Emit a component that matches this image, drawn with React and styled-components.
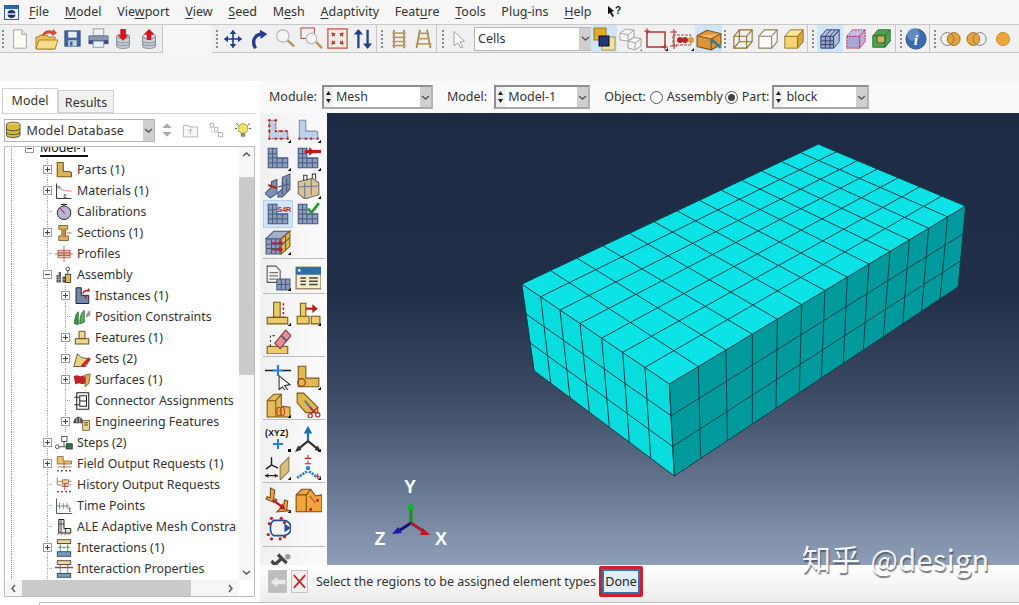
import React from 'react';
import styled, { createGlobalStyle } from 'styled-components';

const Global = createGlobalStyle`
  html, body { margin: 0; padding: 0; background: #fff; }
  * { box-sizing: border-box; }
`;
const FONT = `"Noto Sans", "Open Sans", Arial, sans-serif`;

const Page = styled.div`
  width: 1019px; height: 605px; overflow: hidden; position: relative;
  display: flex; flex-direction: column; background: #fff;
  font-family: ${FONT}; font-size: 12.5px; color: #333;
`;
const MenuBar = styled.div`
  height: 24px; display: flex; align-items: center; background: #f6f6f6; padding: 0 0 0 4px; flex: none;
`;
const MenuList = styled.div`display: flex; gap: 15.7px; margin-left: 10px; line-height: 24px; padding-bottom: 1px;`;
const MenuItem = styled.span`
  color: #333; white-space: nowrap;
  u { text-underline-offset: 2px; }
`;
const HelpCursor = styled.span`display: flex; margin-left: 16px;`;

const ToolRow = styled.div`
  height: 29px; flex: none; display: flex; background: #f6f6f6;
  border-top: 1px solid #c9c9c9;
`;
const ToolGroupA = styled.div`
  width: 163px; height: 28px; display: flex; align-items: center; background: #efefef;
  border-right: 1px solid #c4c4c4; border-bottom: 1px solid #c4c4c4;
`;
const ToolGap = styled.div`width: 49px; flex: none;`;
const ToolGroupB = styled.div`
  flex: 1; height: 28px; display: flex; align-items: center; background: #f0f0f0;
  border-bottom: 1px solid #c4c4c4; overflow: hidden;
`;
const Grip = styled.span`
  width: ${p => p.$w || 8}px; height: 18px; flex: none;
  background: repeating-linear-gradient(to bottom, #8a8a8a 0 2px, transparent 2px 4px) no-repeat ${p => p.$x || 3}px 0 / 2px 100%;
`;
const ToolBtn = styled.span`
  width: ${p => p.$w || 26}px; height: 27px; flex: none; display: flex; align-items: center; justify-content: center;
  background: ${p => (p.$on ? '#cfe5f8' : 'transparent')};
`;
const ToolSep = styled.span`width: 1px; height: 27px; flex: none; background: #c8c8c8;`;
const CellsCombo = styled.span`
  width: 117px; height: 24px; margin: 0 0 0 2px; flex: none; display: flex; align-items: stretch; background: #fff;
  border: 1px solid #b5b5b5; border-right: 0; line-height: 21px; padding-left: 3px; justify-content: space-between;
`;
const Spacer = styled.div`height: 28px; flex: none; background: #f5f5f5;`;

const Main = styled.div`flex: 1; min-height: 0; display: flex;`;
const Left = styled.div`width: 260px; flex: none; display: flex; flex-direction: column; background: #fff; padding: 7px 0 5px 4px;`;
const Tabs = styled.div`display: flex; height: 25px; flex: none; margin-left: -2px; align-items: flex-end;`;
const Tab = styled.div`
  width: ${p => p.$w}px; height: ${p => (p.$on ? 25 : 23)}px; text-align: center; line-height: 24px;
  background: ${p => (p.$on ? '#fff' : '#f1f1f1')}; border: 1px solid #d2d2d2; border-bottom: ${p => (p.$on ? '0' : '1px solid #d2d2d2')};
`;
const DbRow = styled.div`height: 33px; flex: none; display: flex; align-items: center; margin-right: 5px; border-top: 1px solid #d2d2d2; margin-left: -2px; padding-left: 2px;`;
const DbCombo = styled.div`
  width: 154px; height: 23px; display: flex; align-items: center; border: 1px solid #b5b5b5; background: #fff;
  line-height: 21px; letter-spacing: .15px;
`;
const DbIcons = styled.div`display: flex; align-items: center;`;
const DropBtn = styled.span`
  width: ${p => p.$w || 11}px; align-self: stretch; margin-left: auto; flex: none; background: #cfcfcf;
  display: flex; align-items: center; justify-content: center;
`;
const TreeBox = styled.div`
  flex: 1; min-height: 0; width: 251px; border: 1px solid #bdbdbd;
  display: grid; grid-template-columns: 1fr 15px; grid-template-rows: 1fr 16px;
`;
const TreeClip = styled.div`overflow: hidden; min-width: 0; min-height: 0; margin-right: 2px;`;
const TreeList = styled.div`margin-top: -9px;`;
const TreeRow = styled.div`
  height: 21px; display: flex; align-items: center; white-space: nowrap; overflow: hidden;
  padding-left: ${p => (p.$l === 0 ? 20 : p.$l === 1 ? 38 : 56)}px;
  background-repeat: no-repeat;
  background-image:
    repeating-linear-gradient(to bottom, #9a9a9a 0 1px, transparent 1px 2px),
    repeating-linear-gradient(to bottom, #a8a8a8 0 1px, transparent 1px 2px),
    repeating-linear-gradient(to bottom, #a8a8a8 ${p => (p.$l === 2 ? '0 1px' : '0 0')}, transparent ${p => (p.$l === 2 ? '1px 2px' : '0 2px')});
  background-size: 1px 100%, ${p => (p.$l === 0 ? '0' : '1px')} 100%, 1px 100%;
  background-position: 6px 0, 42px 0, 60px 0;
`;
const Expander = styled.span`
  width: 9px; height: 9px; flex: none; border: 1px solid #9c9c9c; background: #fff;
  display: flex; align-items: center; justify-content: center; margin-right: 3px; position: relative;
  &::before { content: ''; width: 5px; height: 1px; background: #444; position: absolute; }
  &::after { content: ''; width: 1px; height: 5px; background: #444; position: absolute; display: ${p => (p.$open ? 'none' : 'block')}; }
`;
const Stub = styled.span`
  height: 1px; flex: none; margin-left: 4px; width: 5px; margin-right: 3px; border-top: 1px dotted #aaa;
`;
const TreeIcon = styled.span`width: 18px; height: 18px; flex: none; margin-right: 4px; display: flex; align-items: center; justify-content: center;`;
const TreeText = styled.span`
  color: #333; font-size: 12.4px;
  ${p => p.$sel && `border-bottom: 2px solid #111; line-height: 15px; color: #111; margin-left: 3px;`}
`;
const VScroll = styled.div`background: #f6f6f6; display: flex; flex-direction: column; align-items: stretch; grid-column: 2; grid-row: 1;`;
const VArrow = styled.span`height: 15px; display: flex; align-items: center; justify-content: center; flex: none; margin-top: ${p => (p.$end ? 'auto' : '0')};`;
const VThumb = styled.div`height: 198px; margin-top: 15px; background: #cbcbcb; flex: none;`;
const HScroll = styled.div`background: #f6f6f6; display: flex; align-items: stretch;`;
const HArrow = styled.span`width: 17px; display: flex; align-items: center; justify-content: center; flex: none; margin-left: ${p => (p.$end ? 'auto' : '0')};`;
const HThumb = styled.div`width: 169px; background: #cbcbcb; flex: none;`;
const Corner = styled.div`background: #fff;`;

const Right = styled.div`flex: 1; min-width: 0; display: flex; flex-direction: column;`;
const ContextBar = styled.div`
  height: 32px; flex: none; display: flex; align-items: center; background: #fafafa; padding-left: 9px; line-height: 20px;
`;
const Label = styled.span`margin: ${p => p.$m || '0'}; white-space: nowrap;`;
const CtxCombo = styled.span`
  width: ${p => p.$w}px; height: 24px; flex: none; display: flex; align-items: center; background: #fff;
  border: 2px solid #a9a9a9; border-top-color: #8f8f8f; border-left-color: #8f8f8f; border-right-color: #b4b4b4; margin: ${p => p.$m || '0'};
`;
const Spin = styled.span`
  width: 9px; height: 100%; flex: none; background: #efefef; margin-right: 3px; display: flex; flex-direction: column; align-items: center; justify-content: center; gap: 2px;
`;
const Radio = styled.span`
  width: 13px; height: 13px; border-radius: 50%; border: 1px solid #555; flex: none; background: #fff; margin: 0 4px 0 ${p => (p.$on ? 2 : 4)}px;
  display: flex; align-items: center; justify-content: center;
  &::after { content: ''; width: 7px; height: 7px; border-radius: 50%; background: #444; display: ${p => (p.$on ? 'block' : 'none')}; }
`;

const Work = styled.div`height: 452px; flex: none; display: flex;`;
const Toolbox = styled.div`
  width: 67px; flex: none; overflow: hidden; background: linear-gradient(to right, #f0f0f0, #fbfbfb); padding-left: 3px;
`;
const BoxSection = styled.div`
  display: grid; grid-template-columns: 30px 30px; grid-auto-rows: 28px; width: 62px;
  padding: ${p => p.$p}; border-bottom: ${p => (p.$last ? '0' : '1px solid #bdbdbd')};
`;
const BoxBtn = styled.span`
  display: flex; align-items: center; justify-content: center; height: 28px;
  ${p => p.$on && `background: #cfe5f8; box-shadow: inset 0 0 0 1px #b4d2ec;`}
`;
const Viewport = styled.div`
  flex: 1; position: relative; overflow: hidden;
  background: linear-gradient(to bottom, #1c2a43 0%, #222f49 40%, #3b4963 62%, #66758f 82%, #8f9fb8 100%);
`;
const Scene = styled.svg`position: absolute; left: 0; top: 0; width: 692px; height: 452px;`;
const Prompt = styled.div`
  flex: 1; display: flex; align-items: center; padding: 0 0 4px 8px; background: linear-gradient(to bottom, #fff, #ececec);
`;
const PromptBtn = styled.span`
  width: ${p => p.$w}px; height: 23px; flex: none; display: flex; align-items: center; justify-content: center;
  background: ${p => p.$bg}; border: 1px solid #c4c4c4; margin-right: 4px;
`;
const PromptText = styled.span`margin-left: 4px; white-space: nowrap;`;
const DoneOutline = styled.span`
  width: 44px; height: 31px; margin-left: 3px; border: 3px solid #d0202a; border-radius: 2px; flex: none; display: flex;
`;
const DoneBtn = styled.span`
  flex: 1; border: 2px solid #2f74b5; background: #e3eef8; text-align: center; line-height: 21px; color: #222;
`;
const Footer = styled.div`height: 3px; flex: none; display: flex; background: #fff;`;
const FooterTab = styled.div`width: 40px; flex: none; border-right: 1px solid #c8c8c8;`;
const FooterLine = styled.div`flex: 1; border-top: 1px solid #bcbcbc;`;
const Watermark = styled.div`
  position: absolute; left: 802px; top: 536px; white-space: nowrap; color: rgba(255,255,255,.92);
  font-family: "Noto Sans CJK SC", "Noto Sans", sans-serif; font-size: 29px; line-height: 44px; letter-spacing: .3px; word-spacing: 3px;
  text-shadow: 1px 2px 1px rgba(70,75,85,.75);
`;
const SvgBase = styled.svg`display: block; flex: none; overflow: hidden;`;

const Ic = ({ s = 24, vb = '0 0 24 24', children }) => <SvgBase width={s} height={s} viewBox={vb}>{children}</SvgBase>;
const Tri = <path d="M24 21v3h-3z" fill="#111" />;
const Chev = ({ d }) => (
  <SvgBase width="9" height="9" viewBox="0 0 9 9"><path d={d === 'up' ? 'M1 6l3.5-3L8 6' : d === 'left' ? 'M6 1L3 4.5 6 8' : d === 'right' ? 'M3 1l3 3.5L3 8' : 'M1 3l3.5 3L8 3'} fill="none" stroke="#555" strokeWidth="1.4" /></SvgBase>
);
const Tan = '#d9b45a';
const Dots = ({ pts, r = 1.1 }) => <>{pts.map(([x, y], i) => <circle key={i} cx={x} cy={y} r={r} fill="#b8232b" />)}</>;
const MeshL = ({ x = 0, y = 0, k = 1 }) => (
  <g transform={`translate(${x} ${y}) scale(${k})`}>
    <path d="M3 3h8v9h10v9H3z" fill="#8b9cbc" stroke="#46587f" />
    <path d="M3 8h8M3 12h18M3 16.500h18M7 3v18M11 12v9M16 12v9" stroke="#46587f" fill="none" strokeWidth=".9" />
  </g>
);
const LShape = (p) => <path d="M4 3h6v10h9a2 2 0 0 1 2 2v5H4z" {...p} />;
const Cyl = ({ up }) => (
  <Ic s={22}>
    <path d="M4 9v11c0 3 14 3 14 0V9z" fill="#c8ced6" stroke="#7b8793" />
    <ellipse cx="11" cy="9" rx="7" ry="2.500" fill="#dfe3e8" stroke="#7b8793" />
    <path d="M4 14c0 3 14 3 14 0M4 17c0 3 14 3 14 0" fill="none" stroke="#7b8793" />
    <path d={up ? 'M11 1l6 6h-3.500v6h-5V7H5z' : 'M8 1h6v7h3l-6 6-6-6h3z'} fill="#d3141c" />
  </Ic>
);

const icons = {
  logo: <Ic s={15} vb="0 0 15 15"><rect x=".5" y=".5" width="14" height="14" fill="#f4f8fc" stroke="#2d5f9e" /><rect x="1" y="1" width="13" height="3" fill="#2d67ad" /><circle cx="7.500" cy="9" r="4" fill="#1c2f6b" /><path d="M3 9h9" stroke="#fff" strokeWidth="1.300" /></Ic>,
  help: <Ic s={15} vb="0 0 15 15"><path d="M1 1l6 5-2.500 1 2.500 4-1.500 1-2.400-4L1 9z" fill="#111" /><text x="8" y="9" fontSize="10" fontWeight="700" fontFamily="Liberation Sans" fill="#222">?</text></Ic>,
  newDoc: <Ic s={22}><path d="M5 2h9l5 5v15H5z" fill="#fbfaf2" stroke="#9ba3ad" /><path d="M14 2v5h5" fill="#e6e6e6" stroke="#9ba3ad" /></Ic>,
  open: <Ic s={24}><path d="M2 22l0-12h3l1-2h7l1 2h7v12z" fill="#e9c25a" stroke="#a98325" /><path d="M2 22l3-9h19l-3 9z" fill="#f6da85" stroke="#a98325" /><path d="M8 9c1-5 6-7 11-5l0-2 4 4-5 3 0-2c-3-1-7-1-8 2z" fill="#d9482a" /></Ic>,
  save: <Ic s={17} vb="0 0 20 20"><rect x="1" y="1" width="18" height="18" fill="#3e64a0" stroke="#2f4e80" /><rect x="5" y="2" width="10" height="7" fill="#e9edf4" /><rect x="5" y="12" width="10" height="7" fill="#c6cfde" /><rect x="7" y="13.500" width="3" height="5" fill="#3e64a0" /></Ic>,
  print: <Ic s={21}><rect x="6" y="1" width="12" height="8" fill="#eef0f4" stroke="#8b95a3" /><path d="M1 9h22v9H1z" fill="#8a97ad" stroke="#616e85" /><rect x="1" y="14" width="22" height="4" fill="#304e90" /><rect x="6" y="15" width="12" height="7" fill="#f0f1f3" stroke="#8b95a3" /></Ic>,
  dbDown: <Cyl />,
  dbUp: <Cyl up />,
  move: <Ic s={20}><path d="M12 2v20M2 12h20" stroke="#233e8e" strokeWidth="2" /><path d="M12 1l4 5H8zM12 23l4-5H8zM1 12l5-4v8zM23 12l-5-4v8z" fill="#233e8e" /></Ic>,
  rotate: <Ic s={20}><path d="M8 23C3 16 6 7 15 6" fill="none" stroke="#233e8e" strokeWidth="4" /><path d="M13 1l9 5-8 6z" fill="#233e8e" /></Ic>,
  zoom: <Ic s={21}><path d="M13 13l9 8" stroke="#b39a62" strokeWidth="3" /><circle cx="9" cy="9" r="7" fill="#f3f4f4" stroke="#bdbdbd" strokeWidth="1.500" /></Ic>,
  boxZoom: <Ic s={23}><rect x="1" y="1" width="14" height="11" fill="none" stroke="#a34a44" /><path d="M16 15l7 7" stroke="#b39a62" strokeWidth="2.500" /><circle cx="12" cy="12" r="5.500" fill="#f3f4f4" stroke="#bdbdbd" strokeWidth="1.300" /></Ic>,
  fit: <Ic s={21}><rect x="1" y="1" width="22" height="22" fill="#eeeae4" stroke="#c45a4c" strokeWidth="1.500" /><path d="M5 5l5 1-4 4zM19 5l-1 5-4-4zM5 19l1-5 4 4zM19 19l-5-1 4-4z" fill="#bf3b2c" /><path d="M6 6l3 3M18 6l-3 3M6 18l3-3M18 18l-3-3" stroke="#bf3b2c" strokeWidth="1.500" /></Ic>,
  flip: <Ic s={22}><path d="M7 22V4M17 2v18" stroke="#233e8e" strokeWidth="2.500" /><path d="M7 1l5 6H2zM17 23l5-6H12z" fill="#233e8e" /></Ic>,
  rails: <Ic s={20}><path d="M6 1v22M18 1v22" stroke="#a08a50" strokeWidth="2" /><path d="M4 5h16M4 10h16M4 15h16M4 20h16" stroke="#b59e63" strokeWidth="2" /></Ic>,
  rails2: <Ic s={21}><path d="M8 2L4 23M16 2l4 21" stroke="#a08a50" strokeWidth="2" /><path d="M6 6h12M5 12h14M3 18h18" stroke="#b59e63" strokeWidth="2" /></Ic>,
  cursor: <Ic s={18}><path d="M4 2l14 13-6 1 4 7-3 1-4-7-5 4z" fill="#fafafa" stroke="#a2a2a2" strokeWidth="1.300" /></Ic>,
  sel1: <Ic s={24}><rect x="2" y="1" width="12" height="12" fill="#e3a92d" stroke="#9c7618" /><rect x="10" y="10" width="13" height="13" fill="#f4e59c" stroke="#a78f3c" /><rect x="7" y="9" width="10" height="10" fill="#22357f" stroke="#111" /></Ic>,
  sel2: <Ic s={24}><path d="M2 6l6-4 8 1v7l-6 4-8-1z M10 14l6-4 7 2v7l-6 4-7-2z" fill="#f4f4f4" stroke="#a4a4a4" /><path d="M2 6l8 2v6M16 3l-6 5M10 14l7 2v7M23 12l-6 4" fill="none" stroke="#a4a4a4" /><path d="M24 22v2h-2z" fill="#666" /></Ic>,
  sel3: <Ic s={24}><rect x="3" y="5" width="18" height="15" fill="none" stroke="#a6473f" strokeWidth="1.600" /><path d="M3 1v6M0 4h6M21 17v6M18 20h6" stroke="#b8232b" />{Tri}</Ic>,
  sel4: <Ic s={24}><path d="M4 2v20" stroke="#b8232b" /><path d="M0 5h7M0 19h7" stroke="#b8232b" /><path d="M3 8h18v10H3z" fill="none" stroke="#a6473f" strokeDasharray="3 1" /><circle cx="10" cy="13" r="3" fill="#b8232b" /><circle cx="15" cy="13" r="3" fill="#b8232b" /><circle cx="21" cy="13" r="3" fill="#d59a3e" />{Tri}</Ic>,
  sel5: <Ic s={26}><path d="M1 9l9-5 13 3v10l-9 5-13-3z" fill="#e0943a" stroke="#7c5317" /><path d="M1 9l13 3 9-5" fill="#f0b868" stroke="#7c5317" /><path d="M14 12v10" stroke="#7c5317" /><path d="M16 14l7 6" stroke="#3b7f8f" strokeWidth="2.500" /><circle cx="15" cy="14" r="2" fill="#2e7f90" /></Ic>,
  wire: <Ic s={22}><path d="M2 9l6-7h14v13l-6 7H2z" fill="none" stroke="#8f6f2a" strokeWidth="1.200" /><path d="M2 9h14v13M16 9l6-7M8 2v13M2 22l6-7h14" fill="none" stroke="#8f6f2a" strokeWidth="1.200" /></Ic>,
  hidden: <Ic s={22}><path d="M2 9l6-7h14v13l-6 7H2z" fill="#fbfbfb" stroke="#8f8060" strokeWidth="1.200" /><path d="M2 9h14v13M16 9l6-7" fill="none" stroke="#8f8060" strokeWidth="1.200" /></Ic>,
  solid: <Ic s={22}><path d="M2 9h14v13H2z" fill="#f2d66d" stroke="#8f6f2a" /><path d="M2 9l6-7h14l-6 7z" fill="#f9e79a" stroke="#8f6f2a" /><path d="M16 9l6-7v13l-6 7z" fill="#d6a83a" stroke="#8f6f2a" /></Ic>,
  meshCube: <Ic s={22}><path d="M2 9h14v13H2z" fill="#96a4c6" stroke="#2f3f72" /><path d="M2 9l6-7h14l-6 7zM16 9l6-7v13l-6 7z" fill="#b4bfd9" stroke="#2f3f72" /><path d="M7 9v13M12 9v13M2 14h14M2 18h14M13 2l-6 7M18 2l-6 7" stroke="#2f3f72" fill="none" /></Ic>,
  dashCube: <Ic s={22}><path d="M2 9h14v13H2z" fill="#aaa6d4" stroke="#b4235e" strokeDasharray="2 1" /><path d="M2 9l6-7h14l-6 7z" fill="#c4bde0" stroke="#b4235e" strokeDasharray="2 1" /><path d="M16 9l6-7v13l-6 7z" fill="#c7a6cf" stroke="#b4235e" strokeDasharray="2 1" /></Ic>,
  greenCube: <Ic s={21}><path d="M2 9l6-7h14v13l-6 7H2z" fill="#4da34c" stroke="#2a6b2c" /><path d="M7 8h9v9H7z" fill="#c8b36a" stroke="#5a4e20" /><path d="M2 9h14v13M16 9l6-7" fill="none" stroke="#2a6b2c" /></Ic>,
  info: <Ic s={22}><circle cx="12" cy="12" r="11" fill="#3c6cb0" stroke="#2b4e86" /><circle cx="9" cy="7" r="7" fill="#7ea4d6" opacity=".55" /><text x="12" y="18" textAnchor="middle" fontFamily="Liberation Serif" fontStyle="italic" fontWeight="700" fontSize="17" fill="#fff">i</text></Ic>,
  circA: <Ic s={22}><circle cx="15" cy="12" r="7" fill="#e8a23a" stroke="#9a6a18" /><circle cx="8" cy="12" r="7" fill="none" stroke="#777" /></Ic>,
  circB: <Ic s={22}><circle cx="8" cy="12" r="7" fill="#e8a23a" stroke="#9a6a18" /><circle cx="15" cy="12" r="7" fill="none" stroke="#777" /></Ic>,
  circC: <Ic s={16}><circle cx="12" cy="12" r="10" fill="#eda53a" stroke="#b87d20" /></Ic>,
  block: <Ic s={20}><rect x="2" y="1" width="20" height="22" fill="#e0b45a" stroke="#8f6f2a" /></Ic>,
  dbStack: <Ic s={18}><ellipse cx="11" cy="5" rx="9" ry="3.500" fill="#e8cf55" stroke="#333" /><path d="M2 5v14c0 4 18 4 18 0V5" fill="#d9b93c" stroke="#333" /><path d="M2 10c0 4 18 4 18 0M2 15c0 4 18 4 18 0" fill="none" stroke="#333" /></Ic>,
  updown: <Ic s={16}><path d="M12 2l7 7H5zM12 22l7-7H5z" fill="#a9a9a9" /></Ic>,
  folderUp: <Ic s={17}><path d="M2 5h7l1 2h12v14H2z" fill="#f6f6f6" stroke="#9aa3a8" /><path d="M12 10v7M9 13l3-3 3 3" fill="none" stroke="#9aa3a8" /></Ic>,
  treeView: <Ic s={17}><rect x="3" y="2" width="5" height="5" fill="none" stroke="#9aa3a8" /><rect x="9" y="8" width="5" height="5" fill="none" stroke="#9aa3a8" /><rect x="15" y="15" width="6" height="6" fill="none" stroke="#9aa3a8" /><path d="M5 7v8h10" fill="none" stroke="#9aa3a8" strokeDasharray="1 1" /></Ic>,
  bulb: <Ic s={18}><circle cx="12" cy="10" r="6.500" fill="#f2e267" stroke="#8c8a3a" /><rect x="9" y="16" width="6" height="5" fill="#8a8a7a" /><path d="M3 3l3 3M21 3l-3 3M1 10h3M20 10h3" stroke="#333" /></Ic>,

  parts: <Ic s={18}><path d="M3 2h8v12h8c2 0 3 1 3 3v4H3z" fill={Tan} stroke="#7a5a14" strokeWidth="1.500" /></Ic>,
  materials: <Ic s={18}><path d="M2 2v20h20" fill="none" stroke="#333" strokeWidth="1.300" /><path d="M2 3c5 7 8 9 20 9" fill="none" stroke="#b8232b" strokeDasharray="2 1" /><text x="11" y="21" fontSize="12" fontFamily="Liberation Serif" fill="#222">ε</text><text x="3" y="9" fontSize="8" fill="#222" fontFamily="Liberation Serif">σ</text></Ic>,
  calib: <Ic s={18}><circle cx="12" cy="13" r="9" fill="#b6b7d8" stroke="#222" strokeWidth="1.300" /><path d="M7 7l6 7" stroke="#b8232b" strokeWidth="1.500" /><path d="M12 1v3M8 2h8" stroke="#222" strokeWidth="1.300" /></Ic>,
  sections: <Ic s={18}><path d="M5 2h12v5h-3v9h4v6H5v-6h4V7H5z" fill={Tan} stroke="#6b4d14" /><path d="M12 6v12M16 12h6" stroke="#b8232b" /></Ic>,
  profiles: <Ic s={18}><rect x="4" y="7" width="16" height="10" fill="#f4dcc8" stroke="#a84a33" /><path d="M12 1v22M0 12h24M4 10h16M4 14h16" stroke="#a84a33" /></Ic>,
  assembly: <Ic s={18}><path d="M2 22V12h3V8h3v14zM10 22V14h5v8z" fill="#555" /><path d="M2 15h6M2 18h13M5 8v14" stroke="#bbb" strokeWidth=".8" /><circle cx="17" cy="4" r="2.500" fill="#fff" stroke="#222" /><path d="M17 6v5" stroke="#222" /><rect x="14" y="11" width="7" height="11" fill={Tan} stroke="#222" /></Ic>,
  instances: <Ic s={18}><path d="M4 1h7v10h10v11H4z" fill="#7188ad" stroke="#222" strokeWidth="1.300" /><path d="M13 9c1-3 4-5 8-4" fill="none" stroke="#c5222a" strokeWidth="1.800" /><path d="M20 1l3 4-4 2zM14 11l5 2-2 3z" fill="#c5222a" /></Ic>,
  position: <Ic s={18}><path d="M2 21c0-8 2-13 5-16v17z" fill="#3f9a47" stroke="#1e5c26" /><path d="M9 21c0-9 2-14 6-18v16z" fill="#57ad5a" stroke="#1e5c26" /><path d="M17 13c0-5 2-8 6-10v7z" fill="#9a9a9a" /></Ic>,
  features: <Ic s={18}><path d="M8 3h8v10h-8z" fill="#f0d690" stroke="#5a4410" strokeWidth="1.200" /><rect x="3" y="13" width="18" height="7" fill="#f0d690" stroke="#5a4410" strokeWidth="1.200" /></Ic>,
  sets: <Ic s={18}><path d="M1 22l5-17 5 5 12 2-6 10z" fill="#f1d27e" stroke="#333" /><path d="M12 22l10-11" stroke="#c9262e" strokeWidth="4" /></Ic>,
  surfaces: <Ic s={18}><path d="M1 7c6-4 8 3 14-2l2 11c-6 4-8-2-14 2z" fill="#bd2428" /><path d="M17 5l6-1-2 13-5 4z" fill="#d8b45a" stroke="#6b4d14" /></Ic>,
  connector: <Ic s={18}><path d="M5 1h16v22H5z" fill="#fff" stroke="#222" strokeWidth="1.400" /><path d="M2 7h6M2 17h6M9 5h9v14H9zM9 12h9" fill="none" stroke="#222" strokeWidth="1.400" /></Ic>,
  engineering: <Ic s={18}><path d="M1 13C3 3 11 3 14 13z" fill="#555" stroke="#111" /><path d="M5 13V6M9 13V6M13 13l0-4" stroke="#ddd" /><rect x="13" y="10" width="9" height="13" fill="#f0d690" stroke="#5a4410" /><path d="M15 13h5M15 16h5" stroke="#111" /></Ic>,
  steps: <Ic s={18}><circle cx="3" cy="17" r="2.500" fill="#fff" stroke="#222" /><rect x="9" y="3" width="7" height="7" fill="#fff" stroke="#222" /><rect x="15" y="13" width="8" height="7" fill="#2d7a4a" stroke="#222" /><path d="M5 17h10M12 10v7" stroke="#222" /></Ic>,
  field: <Ic s={18}><path d="M3 2h8v6h11v4H3z" fill="#e8c36a" stroke="#8a5a33" /><path d="M3 16h19" stroke="#8a5a33" /><path d="M12 9v9" stroke="#b8232b" /><path d="M3 21h2M8 21h2M14 21h2M19 21h2" stroke="#333" strokeWidth="2" /></Ic>,
  history: <Ic s={18}><path d="M3 2v10h19M3 7h19" fill="none" stroke="#a6473f" /><path d="M10 5h8v5h-8z" fill="#f0d690" stroke="#8a5a33" /><path d="M13 9v10M9 14h9" stroke="#b8232b" /><path d="M3 21h2M8 21h2M14 21h2M19 21h2" stroke="#333" strokeWidth="2" /></Ic>,
  time: <Ic s={18}><path d="M2 2v20h21" fill="none" stroke="#222" /><path d="M2 12h17M6 8v8M11 8v8M16 8v8" stroke="#4a6aa6" /><text x="18" y="20" fontSize="10" fill="#222" fontFamily="Liberation Sans">t</text></Ic>,
  ale: <Ic s={18}><path d="M5 2h7v12h9v6H5z" fill="#e4e4e4" stroke="#222" strokeWidth="1.300" /><path d="M5 8h7M8 2v18M14 14v6" stroke="#222" /><path d="M3 23l2-3M8 23l2-3M13 23l2-3M18 23l2-3" stroke="#b8232b" /></Ic>,
  interactions: <Ic s={18}><rect x="3" y="1" width="18" height="5" fill="#f0d690" stroke="#222" /><rect x="3" y="17" width="18" height="6" fill="#6d9fc4" stroke="#222" /><path d="M7 6v11M17 6v11" stroke="#2d7a4a" /><path d="M4 11h16" stroke="#2d7a4a" /></Ic>,
  intprops: <Ic s={18}><rect x="3" y="1" width="18" height="5" fill="#f0d690" stroke="#222" /><rect x="3" y="18" width="18" height="5" fill="#6d9fc4" stroke="#222" /><path d="M0 10h24" stroke="#a6473f" strokeWidth="2" /><path d="M7 6v12M17 6v12" stroke="#2d7a4a" /></Ic>,

  /* module toolbox */
  t1a: <Ic s={26}><LShape fill="#bfd0e8" stroke="#a6473f" strokeDasharray="2 1" /><Dots pts={[[4, 3], [10, 3], [4, 8], [4, 13], [4, 20], [10, 13], [15, 13], [20, 13], [10, 20], [15, 20], [21, 20]]} />{Tri}</Ic>,
  t1b: <Ic s={26}><LShape fill="#c0d0e6" stroke="#7f8eb0" /><Dots pts={[[4, 20], [10, 20], [15, 20], [21, 20]]} />{Tri}</Ic>,
  t2a: <Ic s={26}><MeshL />{Tri}</Ic>,
  t2b: <Ic s={26}><MeshL /><path d="M9 6h15" stroke="#c1181f" strokeWidth="3" /><path d="M13 2l5 4-5 4z" fill="#c1181f" />{Tri}</Ic>,
  t3a: <Ic s={26}><path d="M0 19l6-6v-5l5-2v13l-6 4z" fill="#7f90b0" stroke="#46587f" /><path d="M12 18l4-3V4l7-3v14l-7 7h-4z" fill="#7f90b0" stroke="#46587f" /><path d="M16 8v12M20 5v12M12 13l11-3" stroke="#46587f" /><path d="M3 11l8 3" stroke="#c1181f" strokeWidth="2" /></Ic>,
  t3b: <Ic s={26}><path d="M3 8l13-3 6 4v11l-13 4-6-5z" fill="#d8c590" stroke="#6a6a70" /><path d="M9 9v14M15 6v14M3 13l19-1" stroke="#6a7aa0" /><path d="M8 7V2h3v5M16 5V1h3v5" fill="none" stroke="#444" />{Tri}</Ic>,
  t4a: <Ic s={26}><MeshL /><text x="11.500" y="10" fontSize="6.500" fontWeight="700" fontFamily="Liberation Sans" fill="#c1181f">S4R</text></Ic>,
  t4b: <Ic s={26}><MeshL /><path d="M12 7l3 4 7-9" fill="none" stroke="#2e9b3a" strokeWidth="2.500" /></Ic>,
  t5a: <Ic s={26}><path d="M1 9h14v14H1z" fill="#8b9cbc" stroke="#46587f" /><path d="M1 9l7-7h15l-8 7z" fill="#9fb0c8" stroke="#46587f" /><path d="M15 9l8-7v14l-8 7z" fill="#e8b84a" stroke="#7a5a14" /><path d="M1 14h14M1 18h14M6 9v14M10 9v14M19 6v14M15 15l8-7" stroke="#46587f" /><path d="M6 13h8M6 19h8" stroke="#b8232b" strokeWidth="1.500" /><path d="M13 10l4 3-4 3zM13 16l4 3-4 3z" fill="#b8232b" />{Tri}</Ic>,
  t6a: <Ic s={26}><path d="M2 1h8l4 4v11H2z" fill="#f4f4f4" stroke="#555" /><path d="M4 7h8M4 10h8M4 13h6" stroke="#777" /><rect x="11" y="13" width="12" height="10" fill="#8b9cbc" stroke="#46587f" /><path d="M15 13v10M19 13v10M11 18h12" stroke="#46587f" />{Tri}</Ic>,
  t6b: <Ic s={26}><rect x="1" y="2" width="23" height="20" fill="#f7eccb" stroke="#7a6a40" /><rect x="1" y="2" width="23" height="7" fill="#2f6ca8" /><circle cx="4" cy="5" r="1.300" fill="#fff" /><path d="M5 12h5M5 15h5M5 18h5M13 12h8M13 15h8M13 18h8" stroke="#444" strokeWidth="1.400" /></Ic>,
  t7a: <Ic s={26}><path d="M8 2h6v14H8z" fill="#eccb6d" stroke="#7a5a14" /><path d="M2 16h19v6H2z" fill="#eccb6d" stroke="#7a5a14" /><path d="M17 3v13" stroke="#c1181f" strokeDasharray="2 2" strokeWidth="1.500" />{Tri}</Ic>,
  t7b: <Ic s={26}><path d="M5 3h5v12H5zM2 15h11v7H2z" fill="#eccb6d" stroke="#7a5a14" /><path d="M15 15h8v7h-8z" fill="#eccb6d" stroke="#7a5a14" /><path d="M10 8h9" stroke="#c1181f" strokeWidth="2" /><path d="M16 4l5 4-5 4z" fill="#c1181f" />{Tri}</Ic>,
  t8a: <Ic s={26}><rect x="2" y="17" width="19" height="7" fill="#eccb6d" stroke="#7a5a14" /><path d="M5 17V7h6" fill="none" stroke="#333" strokeDasharray="2 2" /><path d="M9 14L19 2l5 5-10 12z" fill="#e6909c" stroke="#8a3a4a" /><path d="M15 7l5 5" stroke="#666" strokeWidth="2" /></Ic>,
  t9a: <Ic s={26}><path d="M0 6h8M16 6h8" stroke="#222" strokeWidth="1.500" /><path d="M12 1v10M7 6h10" stroke="#2b7fd0" strokeWidth="2" /><path d="M13 11l10 8-5 1 3 4-2 1-3-4-3 3z" fill="#fff" stroke="#333" /></Ic>,
  t9b: <Ic s={26}><path d="M3 2h7v11h12v8H3z" fill="#e0b84f" stroke="#7a5a14" /><circle cx="6" cy="17" r="3.500" fill="none" stroke="#a02a20" />{Tri}</Ic>,
  t10a: <Ic s={26}><path d="M2 8l6-6h7v11l8 1v9H2z" fill="#e4bc5a" stroke="#7a5a14" /><path d="M2 8h8v15M10 8l5-6" fill="none" stroke="#7a5a14" /><ellipse cx="16" cy="18" rx="2" ry="4" fill="none" stroke="#c1421a" /><ellipse cx="13" cy="18" rx="2" ry="4" fill="none" stroke="#c1421a" />{Tri}</Ic>,
  t10b: <Ic s={26}><path d="M2 1h6l13 13v5H10L2 10z" fill="#e0b84f" stroke="#7a5a14" /><path d="M9 8l8 10" stroke="#777" strokeWidth="2" /><circle cx="14" cy="22" r="2" fill="none" stroke="#c1181f" /><circle cx="21" cy="21" r="2" fill="none" stroke="#c1181f" /><path d="M15 20l6-6M19 19l-5-5" stroke="#c1181f" /></Ic>,
  t11a: <Ic s={26} vb="0 0 26 26"><text x="0" y="10" fontSize="8.500" fontWeight="700" fontFamily="Liberation Sans" fill="#111" letterSpacing=".3">(XYZ)</text><path d="M13 13v10M8 18h10" stroke="#2b7fd0" strokeWidth="2" /><path d="M23 23h3v3h-3z" fill="#111" /></Ic>,
  t11b: <Ic s={26}><path d="M12 2v13" stroke="#1f6fb8" strokeWidth="2" /><path d="M12 0l4 7H8z" fill="#1f6fb8" /><path d="M12 14L2 22M12 14l10 8" stroke="#333" strokeWidth="2" /><path d="M0 24l3-6 3 4zM24 24l-3-6-3 4z" fill="#333" />{Tri}</Ic>,
  t12a: <Ic s={26}><path d="M14 11l8-8v13l-8 8z" fill="#d8c07c" stroke="#8a7a4a" /><path d="M6 3v7M6 10L1 14M6 10l6 3M0 20h12" stroke="#222" strokeWidth="1.300" /><path d="M0 20l3-2v4zM12 20l-3-2v4z" fill="#222" />{Tri}</Ic>,
  t12b: <Ic s={26}><path d="M12 1v14" stroke="#b8232b" strokeDasharray="3 2" /><path d="M9 4h6M9 9h6" stroke="#b8232b" /><circle cx="12" cy="13" r="2" fill="#2b7fd0" /><path d="M11 16L2 22" stroke="#2b7fd0" strokeWidth="2.500" strokeDasharray="2 1" /><path d="M13 16l7 5" stroke="#2b7fd0" strokeWidth="2.500" strokeDasharray="2 1" /><path d="M19 21h5M21 18v5" stroke="#b8232b" />{Tri}</Ic>,
  t13a: <Ic s={26}><path d="M5 1l4 2-1 7 3 2-3 2-7-3 1-2 3 1z" fill="#e9a94a" stroke="#7a4a14" /><path d="M21 13l-1 8 3 1-12 1 3-3 3-1 1-7z" fill="#e9a94a" stroke="#7a4a14" /><path d="M7 12l10 7" stroke="#c1181f" strokeWidth="2" /><path d="M19 21l-6-1 3-5z" fill="#c1181f" />{Tri}</Ic>,
  t13b: <Ic s={27}><path d="M1 7l5-5h8l4 6 6-1v15H1z" fill="#f0a63c" stroke="#7a4a14" /><path d="M1 7h9v15M10 7l4-5" fill="none" stroke="#7a4a14" /><circle cx="14" cy="20" r="1.300" fill="#c1181f" /><circle cx="20" cy="12" r="1.300" fill="#c1181f" /><path d="M13 8l5 6" stroke="#c1421a" /></Ic>,
  t14a: <Ic s={26}><path d="M8 5h9a7 7 0 0 1 0 14H8c-2-1-3-3-3-7s1-6 3-7z" fill="none" stroke="#1d4f9a" strokeWidth="1.500" /><path d="M18 8l6 4-6 4z" fill="#1d4f9a" /><Dots pts={[[6, 3], [15, 3], [18, 7], [18, 20], [6, 22], [14, 22], [4, 8], [3, 18]]} r={1.500} /></Ic>,
  t15a: <Ic s={26}><path d="M2 22L16 9M6 12l8 8M12 6l8 8" stroke="#444" strokeWidth="3" /><circle cx="21" cy="8" r="2.500" fill="#999" /></Ic>,
  back: <Ic s={18}><path d="M2 12l9-7v4h11v6H11v4z" fill="#e9e9e9" /></Ic>,
  cross: <Ic s={17}><path d="M4 3l16 18M20 3L4 21" stroke="#cf1d24" strokeWidth="2.400" /></Ic>,
};

const menu = [
  [<u key="k">F</u>, 'ile'], [<u key="k">M</u>, 'odel'], ['Vie', <u key="k">w</u>, 'port'], [<u key="k">V</u>, 'iew'],
  [<u key="k">S</u>, 'eed'], ['M', <u key="k">e</u>, 'sh'], [<u key="k">A</u>, 'daptivity'], ['Feat', <u key="k">u</u>, 're'],
  [<u key="k">T</u>, 'ools'], ['Plu', <u key="k">g</u>, '-ins'], [<u key="k">H</u>, 'elp'],
];

const tree = [
  { l: 0, t: 'Model-1', e: 'open', sel: true },
  { l: 1, t: 'Parts (1)', i: 'parts', e: 'closed' },
  { l: 1, t: 'Materials (1)', i: 'materials', e: 'closed' },
  { l: 1, t: 'Calibrations', i: 'calib' },
  { l: 1, t: 'Sections (1)', i: 'sections', e: 'closed' },
  { l: 1, t: 'Profiles', i: 'profiles' },
  { l: 1, t: 'Assembly', i: 'assembly', e: 'open' },
  { l: 2, t: 'Instances (1)', i: 'instances', e: 'closed' },
  { l: 2, t: 'Position Constraints', i: 'position' },
  { l: 2, t: 'Features (1)', i: 'features', e: 'closed' },
  { l: 2, t: 'Sets (2)', i: 'sets', e: 'closed' },
  { l: 2, t: 'Surfaces (1)', i: 'surfaces', e: 'closed' },
  { l: 2, t: 'Connector Assignments', i: 'connector' },
  { l: 2, t: 'Engineering Features', i: 'engineering', e: 'closed' },
  { l: 1, t: 'Steps (2)', i: 'steps', e: 'closed' },
  { l: 1, t: 'Field Output Requests (1)', i: 'field', e: 'closed' },
  { l: 1, t: 'History Output Requests', i: 'history' },
  { l: 1, t: 'Time Points', i: 'time' },
  { l: 1, t: 'ALE Adaptive Mesh Constraints', i: 'ale' },
  { l: 1, t: 'Interactions (1)', i: 'interactions', e: 'closed' },
  { l: 1, t: 'Interaction Properties', i: 'intprops' },
];

const sections = [
  { p: '3px 0 2px', items: ['t1a', 't1b', 't2a', 't2b', 't3a', 't3b', 't4a!', 't4b', 't5a'] },
  { p: '5px 0 1px', items: ['t6a', 't6b'] },
  { p: '5px 0 1px', items: ['t7a', 't7b', 't8a'] },
  { p: '6px 0 0', items: ['t9a', 't9b', 't10a', 't10b'] },
  { p: '5px 0 1px', items: ['t11a', 't11b', 't12a', 't12b'] },
  { p: '3px 0 4px', items: ['t13a', 't13b', 't14a'] },
  { p: '0', items: ['t15a'], last: true },
];

/* Mesh geometry, measured on the picture (3x crop of the region starting at 510,130) */
const P = ([x, y]) => [510 + x / 3, 130 + y / 3];
const LF = [[35, 462], [92, 500], [150, 540], [210, 580], [275, 624], [338, 667], [405, 712], [478, 762]].map(P);
const BR = [[925, 42], [980, 65], [1042, 92], [1102, 117], [1165, 143], [1230, 170], [1295, 198], [1367, 228]].map(P);
const LB = [[35, 462], [122, 422], [202, 385], [280, 348], [358, 310], [432, 275], [502, 243], [570, 212], [635, 181], [697, 152], [757, 124], [817, 96], [872, 68], [925, 42]].map(P);
const frontX = [478, 565, 648, 727, 802, 875, 945, 1012, 1077, 1140, 1198, 1256, 1313, 1367];
const FR = frontX.map(x => P([x, 762 - ((x - 478) / 889) * 534]));
const lowX = [493, 572, 652, 727, 798, 868, 934, 1000, 1060, 1120, 1178, 1235, 1290, 1345];
const FRB = lowX.map(x => P([x, 1038 - ((x - 493) / 852) * 568]));
const leftLowX = [72, 122, 180, 238, 298, 358, 422, 493];
const LFB = leftLowX.map(x => P([x, 722 + ((x - 72) / 421) * 316]));
const lerp = (a, b, t) => [a[0] + (b[0] - a[0]) * t, a[1] + (b[1] - a[1]) * t];
const poly = pts => pts.map(p => `${p[0].toFixed(1)},${p[1].toFixed(1)}`).join(' ');
const LV = [0, 0.345, 0.68, 1];
const lineStyle = { stroke: '#10404a', strokeWidth: 1, fill: 'none' };
const meshLines = [];
LF.forEach((p, j) => meshLines.push([p, BR[j]]));
LB.forEach((p, i) => meshLines.push([p, FR[i]]));
FR.forEach((p, i) => meshLines.push([p, FRB[i]]));
LF.forEach((p, j) => meshLines.push([p, LFB[j]]));
[1, 2].forEach(k => {
  const t = LV[k];
  meshLines.push([lerp(FR[0], FRB[0], t), lerp(FR[13], FRB[13], t)]);
  meshLines.push([lerp(LF[0], LFB[0], t), lerp(LF[7], LFB[7], t)]);
});

const Block = () => (
  <g>
    <polygon points={poly([LF[0], BR[0], BR[7], LF[7]])} fill="#0be3e6" />
    <polygon points={poly([LF[0], LF[7], LFB[7], LFB[0]])} fill="#08dcdd" />
    <polygon points={poly([FR[0], FR[13], FRB[13], FRB[0]])} fill="#009a9d" />
    {meshLines.map(([a, b], i) => <line key={i} x1={a[0]} y1={a[1]} x2={b[0]} y2={b[1]} {...lineStyle} />)}
    <polygon points={poly([LF[0], BR[0], BR[7], FRB[13], FRB[0], LFB[0]])} {...lineStyle} />
  </g>
);
const Triad = () => (
  <g>
    <path d="M411 523V508" stroke="#2a8a2a" strokeWidth="3.500" />
    <path d="M410.500 502l4 8h-8z" fill="#0fb52a" />
    <path d="M411 523l-14 9" stroke="#12127a" strokeWidth="3" />
    <path d="M392 534l6-7 4 6z" fill="#1919b0" />
    <path d="M411 523l12 8" stroke="#a81c2c" strokeWidth="3" />
    <path d="M430 535l-10 0 3-7z" fill="#c01628" />
    <text x="410" y="493" textAnchor="middle" fontFamily="Liberation Sans" fontWeight="700" fontSize="18" fill="#fff">Y</text>
    <text x="380" y="545" textAnchor="middle" fontFamily="Liberation Sans" fontWeight="700" fontSize="18" fill="#fff">Z</text>
    <text x="441" y="545" textAnchor="middle" fontFamily="Liberation Sans" fontWeight="700" fontSize="18" fill="#fff">X</text>
  </g>
);

const UpDown = () => (
  <SvgBase width="7" height="16" viewBox="0 0 7 16"><path d="M3.500 2L6 6H1zM3.500 14L6 10H1z" fill="#222" /></SvgBase>
);
const Combo = ({ w, m, text }) => (
  <CtxCombo $w={w} $m={m}>
    <Spin><UpDown /></Spin>
    <span>{text}</span>
    <DropBtn><Chev /></DropBtn>
  </CtxCombo>
);

export default function App() {
  return (
    <Page>
      <Global />
      <MenuBar>
        {icons.logo}
        <MenuList>
          {menu.map((m, i) => <MenuItem key={i}>{m.map((x, j) => <React.Fragment key={j}>{x}</React.Fragment>)}</MenuItem>)}
        </MenuList>
        <HelpCursor>{icons.help}</HelpCursor>
      </MenuBar>
      <ToolRow>
        <ToolGroupA>
          <Grip $w={7} $x={2} />
          {['newDoc', 'open', 'save', 'print', 'dbDown', 'dbUp'].map(k => <ToolBtn key={k}>{icons[k]}</ToolBtn>)}
        </ToolGroupA>
        <ToolGap />
        <ToolGroupB>
          <Grip $w={8} $x={4} />
          {['move', 'rotate', 'zoom', 'boxZoom', 'fit', 'flip'].map(k => <ToolBtn key={k}>{icons[k]}</ToolBtn>)}
          <ToolSep />
          <Grip $w={9} $x={4} />
          {['rails', 'rails2'].map(k => <ToolBtn key={k} $w={25}>{icons[k]}</ToolBtn>)}
          <ToolSep />
          <Grip $w={11} $x={5} />
          <ToolBtn $w={24}>{icons.cursor}</ToolBtn>
          <CellsCombo>Cells<DropBtn $w={12}><Chev /></DropBtn></CellsCombo>
          <ToolBtn $on>{icons.sel1}</ToolBtn>
          {['sel2', 'sel3', 'sel4'].map(k => <ToolBtn key={k}>{icons[k]}</ToolBtn>)}
          <ToolBtn $on $w={27}>{icons.sel5}</ToolBtn>
          <Grip $w={8} $x={2} />
          {['wire', 'hidden', 'solid'].map(k => <ToolBtn key={k} $w={25.5}>{icons[k]}</ToolBtn>)}
          <ToolSep />
          <Grip $w={9} $x={4} />
          <ToolBtn $on>{icons.meshCube}</ToolBtn>
          {['dashCube', 'greenCube'].map(k => <ToolBtn key={k}>{icons[k]}</ToolBtn>)}
          <ToolSep />
          <Grip $w={8} $x={4} />
          <ToolBtn $w={25}>{icons.info}</ToolBtn>
          <ToolSep />
          <Grip $w={8} $x={4} />
          {['circA', 'circB', 'circC', 'block'].map(k => <ToolBtn key={k}>{icons[k]}</ToolBtn>)}
        </ToolGroupB>
      </ToolRow>
      <Spacer />
      <Main>
        <Left>
          <Tabs>
            <Tab $on $w={56}>Model</Tab>
            <Tab $w={56}>Results</Tab>
          </Tabs>
          <DbRow>
            <DbCombo>
              {icons.dbStack}
              <span>&nbsp;Model Database</span>
              <DropBtn><Chev /></DropBtn>
            </DbCombo>
            <DbIcons>
              <ToolBtn $w={24}>{icons.updown}</ToolBtn>
              <ToolBtn $w={22}>{icons.folderUp}</ToolBtn>
              <ToolBtn $w={30}>{icons.treeView}</ToolBtn>
              <ToolBtn $w={24}>{icons.bulb}</ToolBtn>
            </DbIcons>
          </DbRow>
          <TreeBox>
            <TreeClip>
              <TreeList>
                {tree.map(r => (
                  <TreeRow key={r.t} $l={r.l}>
                    {r.e ? <Expander $open={r.e === 'open'} /> : <Stub />}
                    {r.i && <TreeIcon>{icons[r.i]}</TreeIcon>}
                    <TreeText $sel={r.sel}>{r.t}</TreeText>
                  </TreeRow>
                ))}
              </TreeList>
            </TreeClip>
            <VScroll>
              <VArrow><Chev d="up" /></VArrow>
              <VThumb />
              <VArrow $end><Chev /></VArrow>
            </VScroll>
            <HScroll>
              <HArrow><Chev d="left" /></HArrow>
              <HThumb />
              <HArrow $end><Chev d="right" /></HArrow>
            </HScroll>
            <Corner />
          </TreeBox>
        </Left>
        <Right>
          <ContextBar>
            <Label>Module:</Label>
            <Combo w={111} m="0 0 0 5px" text="Mesh" />
            <Label $m="0 0 0 14px">Model:</Label>
            <Combo w={96} m="0 0 0 7px" text="Model-1" />
            <Label $m="0 0 0 14px">Object:</Label>
            <Radio />
            <Label>Assembly</Label>
            <Radio $on />
            <Label>Part:</Label>
            <Combo w={97} m="0 0 0 3px" text="block" />
          </ContextBar>
          <Work>
            <Toolbox>
              {sections.map((s, i) => (
                <BoxSection key={i} $p={s.p} $last={s.last}>
                  {s.items.map(k => {
                    const on = k.endsWith('!');
                    const key = on ? k.slice(0, -1) : k;
                    return <BoxBtn key={key} $on={on}>{icons[key]}</BoxBtn>;
                  })}
                </BoxSection>
              ))}
            </Toolbox>
            <Viewport>
              <Scene viewBox="327 113 692 452">
                <Block />
                <Triad />
              </Scene>
            </Viewport>
          </Work>
          <Prompt>
            <PromptBtn $w={19} $bg="#bdbdbd">{icons.back}</PromptBtn>
            <PromptBtn $w={17} $bg="#efefef">{icons.cross}</PromptBtn>
            <PromptText>Select the regions to be assigned element types</PromptText>
            <DoneOutline><DoneBtn>Done</DoneBtn></DoneOutline>
          </Prompt>
        </Right>
      </Main>
      <Footer><FooterTab /><FooterLine /></Footer>
      <Watermark>知乎 @design</Watermark>
    </Page>
  );
}
